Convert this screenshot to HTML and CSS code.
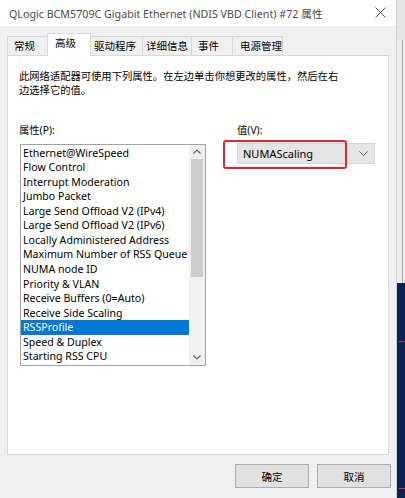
FILE: index.html
```html
<!DOCTYPE html>
<html lang="zh-CN">
<head>
<meta charset="utf-8">
<title>属性</title>
<link rel="stylesheet" href="styles.css">
</head>
<body>
<div class="screen">
  <div class="dialog">
    <div class="titlebar">
      <span class="title">QLogic BCM5709C Gigabit Ethernet (NDIS VBD Client) #72 属性</span>
      <svg class="close" width="11" height="11" viewBox="0 0 11 11"><path d="M0.5 0.5 L10.5 10.5 M10.5 0.5 L0.5 10.5" stroke="#555" stroke-width="1" fill="none"/></svg>
    </div>
    <div class="content">
      <div class="tabs">
        <div class="tab tab-general">常规</div>
        <div class="tab tab-advanced is-active">高级</div>
        <div class="tab tab-driver">驱动程序</div>
        <div class="tab tab-details">详细信息</div>
        <div class="tab tab-events">事件</div>
        <div class="tab tab-power">电源管理</div>
      </div>
      <div class="panel">
        <p class="desc">此网络适配器可使用下列属性。在左边单击你想更改的属性，然后在右边选择它的值。</p>
        <div class="cols">
          <div class="col col-left">
            <div class="label">属性(P):</div>
            <div class="listbox">
              <ul class="items">
                <li>Ethernet@WireSpeed</li>
                <li>Flow Control</li>
                <li>Interrupt Moderation</li>
                <li>Jumbo Packet</li>
                <li>Large Send Offload V2 (IPv4)</li>
                <li>Large Send Offload V2 (IPv6)</li>
                <li>Locally Administered Address</li>
                <li>Maximum Number of RSS Queue</li>
                <li>NUMA node ID</li>
                <li>Priority &amp; VLAN</li>
                <li>Receive Buffers (0=Auto)</li>
                <li>Receive Side Scaling</li>
                <li class="is-selected">RSSProfile</li>
                <li>Speed &amp; Duplex</li>
                <li>Starting RSS CPU</li>
              </ul>
              <div class="scrollbar">
                <div class="sb-btn"><svg width="8" height="5" viewBox="0 0 8 5"><polyline points="0.5,4.5 4,1 7.5,4.5" fill="none" stroke="#606060" stroke-width="1.1"/></svg></div>
                <div class="sb-track"><div class="sb-thumb"></div></div>
                <div class="sb-btn"><svg width="8" height="5" viewBox="0 0 8 5"><polyline points="0.5,0.5 4,4 7.5,0.5" fill="none" stroke="#606060" stroke-width="1.1"/></svg></div>
              </div>
            </div>
          </div>
          <div class="col col-right">
            <div class="label">值(V):</div>
            <div class="combo">
              <span class="combo-text">NUMAScaling</span>
              <svg width="9" height="5" viewBox="0 0 9 5"><polyline points="0.5,0.5 4.5,4.5 8.5,0.5" fill="none" stroke="#606060" stroke-width="1"/></svg>
            </div>
            <div class="annot"></div>
          </div>
        </div>
      </div>
      <div class="buttons">
        <button class="btn">确定</button>
        <button class="btn">取消</button>
      </div>
    </div>
  </div>
  <div class="side">
    <div class="side-top"></div>
    <div class="side-mid"><span class="side-line"></span></div>
    <div class="side-dark"><span class="side-red side-red-1"></span><span class="side-red side-red-2"></span></div>
  </div>
</div>
</body>
</html>
```
FILE: styles.css
```css
* { box-sizing: border-box; }
html, body { margin: 0; padding: 0; }
body {
  width: 405px;
  height: 498px;
  overflow: hidden;
  font-family: "Noto Sans", "Noto Sans CJK SC", sans-serif;
  color: #000;
  background: #f0f0f0;
}
.screen { display: flex; width: 405px; height: 498px; }

.dialog {
  width: 397px;
  height: 498px;
  display: flex;
  flex-direction: column;
  background: #f0f0f0;
  border-right: 1px solid #cfcfcf;
}
.titlebar {
  height: 26px;
  background: #fff;
  display: flex;
  align-items: center;
  justify-content: space-between;
  padding: 0 10px 0 9px;
}
.title {
  font-size: 10.7px;
  color: #4a4a4a;
  white-space: nowrap;
}
.close { margin-top: -1px; }

.content { flex: 1; display: flex; flex-direction: column; }

.tabs {
  height: 29px;
  display: flex;
  align-items: flex-end;
  padding-left: 7px;
  position: relative;
  z-index: 1;
}
.tab {
  height: 19px;
  border: 1px solid #d9d9d9;
  border-bottom: none;
  border-left: none;
  background: #f0f0f0;
  font-size: 10.5px;
  line-height: 18px;
  white-space: nowrap;
}
.tab:first-child { border-left: 1px solid #d9d9d9; }
.tab.is-active {
  height: 23px;
  margin-bottom: -1px;
  background: #fff;
  line-height: 18px;
  border-left: 1px solid #d9d9d9;
  margin-left: -1px;
}
.tab-general  { width: 41px; padding-left: 6px; }
.tab-advanced { width: 44px; padding-left: 7px; }
.tab-driver   { width: 52px; padding-left: 3px; }
.tab-details  { width: 49px; padding-left: 3px; }
.tab-events   { width: 41px; padding-left: 6px; }
.tab-power    { width: 50px; padding-left: 7px; }

.panel {
  width: 382px;
  height: 400px;
  margin-left: 7px;
  background: #fff;
  border: 1px solid #d9d9d9;
  padding: 14px 11px 0;
}
.desc {
  margin: 0;
  width: 325px;
  font-size: 10.3px;
  line-height: 13.5px;
}
.cols {
  display: grid;
  grid-template-columns: 217px 1fr;
  margin-top: 27px;
}
.col { position: relative; }
.label {
  font-size: 10.3px;
  line-height: 13.5px;
}
.listbox {
  margin: 6px 0 0 1px;
  width: 186px;
  height: 222px;
  border: 1px solid #a3a3a3;
  display: flex;
}
.items {
  list-style: none;
  margin: 0;
  padding: 1px 0 0;
  flex: 1;
  font-size: 10.6px;
}
.items li {
  height: 14.57px;
  line-height: 14.57px;
  padding-left: 2px;
  white-space: nowrap;
  overflow: hidden;
}
.items li.is-selected { background: #0078d7; color: #fff; }

.scrollbar {
  width: 16px;
  background: #f0f0f0;
  display: flex;
  flex-direction: column;
}
.sb-btn {
  height: 14px;
  display: flex;
  align-items: center;
  justify-content: center;
}
.sb-track { flex: 1; padding: 0 2px 0 2px; }
.sb-thumb { height: 118px; background: #cdcdcd; }

.col-right { padding-left: 1px; }
.combo {
  margin-top: 5px;
  width: 138px;
  height: 21px;
  background: #e5e5e5;
  border: 1px solid #d4d4d4;
  display: flex;
  align-items: center;
  justify-content: space-between;
  padding: 0 6px 0 5px;
}
.combo-text { font-size: 11px; }
.annot {
  position: absolute;
  left: -13px;
  top: 16px;
  width: 124px;
  height: 29px;
  border: 2px solid #e8262a;
  border-radius: 3px;
}

.buttons {
  display: flex;
  justify-content: flex-end;
  gap: 8px;
  padding: 9px 5px 0 0;
}
.btn {
  width: 74px;
  height: 24px;
  margin: 0;
  padding: 0;
  background: #e1e1e1;
  border: 1px solid #adadad;
  font-family: "Noto Sans CJK SC", sans-serif;
  font-size: 10.5px;
  color: #000;
}

.side {
  width: 8px;
  height: 498px;
  display: flex;
  flex-direction: column;
}
.side-top { height: 40px; background: #e6e6e6; }
.side-mid {
  height: 243px;
  background: #ececec;
  display: flex;
  justify-content: flex-end;
  padding-right: 2px;
}
.side-line { width: 1px; background: #a9a9a9; }
.side-dark {
  flex: 1;
  background: #0b2150;
  position: relative;
}
.side-red { position: absolute; left: 2px; height: 1px; background: #d03030; }
.side-red-1 { top: 58px; width: 5px; }
.side-red-2 { top: 205px; width: 6px; }
```
